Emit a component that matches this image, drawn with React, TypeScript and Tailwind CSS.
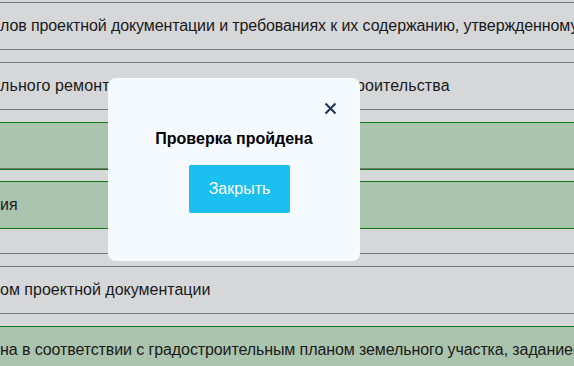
import React from "react";

type Row = {
  text: string;
  green?: boolean;
  mt: string;
  extra?: string;
};

const rows: Row[] = [
  {
    text: "лов проектной документации и требованиях к их содержанию, утвержденному",
    mt: "mt-[2px]",
    extra: "tracking-[-0.1px]",
  },
  {
    text: "льного ремонта всех объектов капитального строительства",
    mt: "mt-[12px]",
    extra: "tracking-[0.12px]",
  },
  { text: "", green: true, mt: "mt-[12px]", extra: "shadow-[inset_0_-1px_0_#777]" },
  { text: "ия", green: true, mt: "mt-[11px]" },
];

const rowsBottom: Row[] = [
  { text: "ом проектной документации", mt: "mt-[12px]" },
  {
    text: "на в соответствии с градостроительным планом земельного участка, заданием",
    green: true,
    mt: "mt-[12px]",
    extra: "tracking-[-0.1px]",
  },
];

const ListRow = ({ row }: { row: Row }) => (
  <div
    className={`${row.mt} h-[48px] flex items-center border-y whitespace-nowrap text-[16px] text-[#1a1a1a] ${
      row.green ? "bg-[#abc4ad] border-[#0c7a0c]" : "border-[#7b7b7b]"
    } ${row.extra ?? ""}`}
  >
    {row.text}
  </div>
);

export default function App() {
  return (
    <div className="relative w-[574px] h-[366px] overflow-hidden bg-[#d6d7d9] font-['Liberation_Sans',Arial,sans-serif]">
      {/* список разделов */}
      <div className="flex flex-col">
        {rows.map((row, i) => (
          <ListRow key={i} row={row} />
        ))}
        <div className="mt-[24px] h-px bg-[#7b7b7b]" />
        {rowsBottom.map((row, i) => (
          <ListRow key={i} row={row} />
        ))}
      </div>

      {/* модальное окно */}
      <div className="absolute left-[108px] top-[78px] w-[252px] h-[183px] rounded-[8px] bg-[#f5faff] flex flex-col items-center">
        <button className="absolute right-[23px] top-[23px] w-[14px] h-[14px] flex items-center justify-center text-[#1d3350]">
          <svg width="13" height="13" viewBox="0 0 13 13" fill="none">
            <path d="M1.5 1.5L11.5 11.5M11.5 1.5L1.5 11.5" stroke="currentColor" strokeWidth="2" />
          </svg>
        </button>
        <h2 className="mt-[51px] text-[16px] leading-[20px] font-bold text-black">
          Проверка пройдена
        </h2>
        <button className="mt-[16px] ml-[11px] w-[101px] h-[48px] rounded-[2px] bg-[#1bc0f0] text-white text-[16px]">
          Закрыть
        </button>
      </div>
    </div>
  );
}
